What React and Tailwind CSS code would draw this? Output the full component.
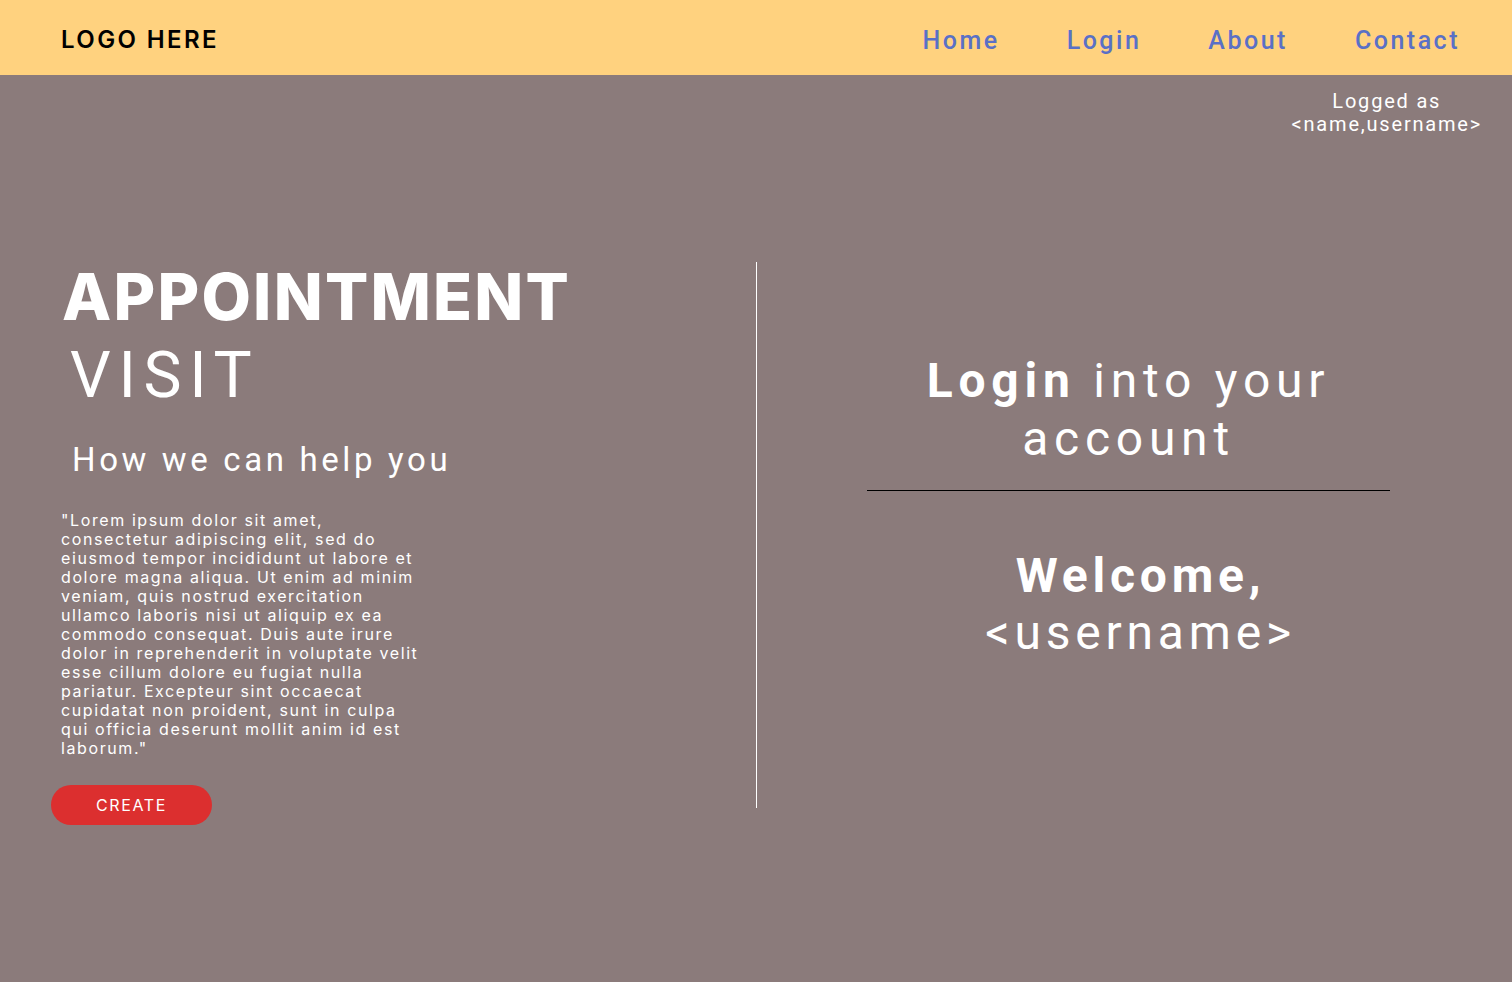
import React from 'react';

const navLinks = ['Home', 'Login', 'About', 'Contact'];

const lorem =
  '"Lorem ipsum dolor sit amet, consectetur adipiscing elit, sed do eiusmod tempor incididunt ut labore et dolore magna aliqua. Ut enim ad minim veniam, quis nostrud exercitation ullamco laboris nisi ut aliquip ex ea commodo consequat. Duis aute irure dolor in reprehenderit in voluptate velit esse cillum dolore eu fugiat nulla pariatur. Excepteur sint occaecat cupidatat non proident, sunt in culpa qui officia deserunt mollit anim id est laborum."';

export default function App() {
  return (
    <div className="min-h-[982px] bg-[#8b7b7b] text-white">
      {/* Header */}
      <header className="h-[75px] bg-[#ffd27f] flex items-center justify-between pl-[61px] pr-[52px] pt-[5px]">
        <div className="font-['Inter',sans-serif] text-[24px] font-semibold tracking-[0.1em] text-black">
          LOGO HERE
        </div>
        <nav className="flex items-center gap-[67px] font-['Roboto',sans-serif] text-[25px] font-medium tracking-[0.1em] text-[#5a70c6]">
          {navLinks.map((link) => (
            <a key={link} href="#" className="leading-none">
              {link}
            </a>
          ))}
        </nav>
      </header>

      {/* Logged user */}
      <div className="flex justify-end pr-[30px] pt-[15px]">
        <p className="text-center font-['Roboto',sans-serif] text-[20px] leading-[23px] tracking-[0.09em]">
          Logged as
          <br />
          {'<name,username>'}
        </p>
      </div>

      {/* Main content */}
      <div className="flex mt-[126px]">
        <div className="w-[756px] shrink-0 pl-[51px] flex flex-col items-start">
          <h1 className="ml-[11px] mt-[3px] font-['Inter',sans-serif] text-[64px] leading-none font-extrabold tracking-[0.035em]">
            APPOINTMENT
          </h1>
          <h2 className="ml-[19px] mt-[15px] font-['Roboto',sans-serif] text-[64px] leading-none font-normal tracking-[0.12em]">
            VISIT
          </h2>
          <h3 className="ml-[21px] mt-[35px] font-['Roboto',sans-serif] text-[33px] leading-none tracking-[0.11em]">
            How we can help you
          </h3>
          <p className="ml-[10px] mt-[35px] w-[366px] font-['Inter',sans-serif] text-[16px] leading-[19px] tracking-[0.1em]">
            {lorem}
          </p>
          <button className="mt-[27px] w-[161px] h-[40px] rounded-full bg-[#dc2f2f] font-['Inter',sans-serif] text-[16px] tracking-[0.1em] text-white">
            CREATE
          </button>
        </div>

        <div className="w-px h-[546px] bg-white" />

        <div className="flex-1 pl-[110px]">
          <div className="w-[523px] flex flex-col items-center font-['Roboto',sans-serif]">
            <h2 className="mt-[90px] text-center text-[48px] leading-[58px] tracking-[0.12em]">
              <span className="font-bold">Login</span> into your
              <br />
              account
            </h2>
            <div className="mt-[22px] w-full h-px bg-black" />
            <h2 className="mt-[56px] pl-[24px] text-center text-[48px] leading-[57px] tracking-[0.1em]">
              <span className="font-bold">Welcome,</span>
              <br />
              <span className="font-normal">{'<username>'}</span>
            </h2>
          </div>
        </div>
      </div>
    </div>
  );
}
